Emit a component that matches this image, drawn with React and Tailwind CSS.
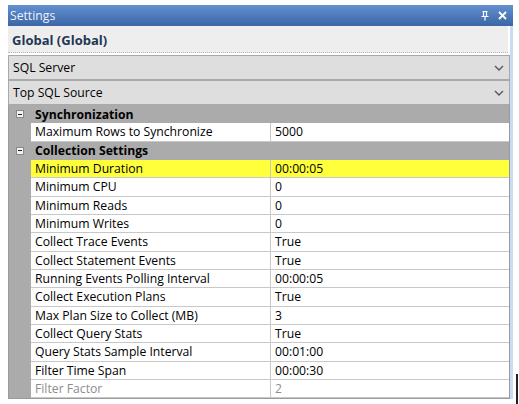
import React from 'react';

const rows = [
  { type: 'cat', name: 'Synchronization' },
  { name: 'Maximum Rows to Synchronize', value: '5000' },
  { type: 'cat', name: 'Collection Settings' },
  { name: 'Minimum Duration', value: '00:00:05', selected: true },
  { name: 'Minimum CPU', value: '0' },
  { name: 'Minimum Reads', value: '0' },
  { name: 'Minimum Writes', value: '0' },
  { name: 'Collect Trace Events', value: 'True' },
  { name: 'Collect Statement Events', value: 'True' },
  { name: 'Running Events Polling Interval', value: '00:00:05' },
  { name: 'Collect Execution Plans', value: 'True' },
  { name: 'Max Plan Size to Collect (MB)', value: '3' },
  { name: 'Collect Query Stats', value: 'True' },
  { name: 'Query Stats Sample Interval', value: '00:01:00' },
  { name: 'Filter Time Span', value: '00:00:30' },
  { name: 'Filter Factor', value: '2', disabled: true },
];

const Chevron = () => (
  <svg width="10" height="6" viewBox="0 0 10 6" className="mr-[5px]">
    <path d="M1 1 L5 5 L9 1" fill="none" stroke="#555" strokeWidth="1.3" />
  </svg>
);

const Combo = ({ label }) => (
  <div className="h-[25px] bg-[#dedede] border border-[#a9a9a9] flex items-center justify-between pl-[4px] text-[12.2px] text-black">
    <span className="pt-[1px]">{label}</span>
    <Chevron />
  </div>
);

const Minus = () => (
  <div className="w-[8px] h-[8px] bg-[#f2f2f2] border border-[#8a8a8a] flex items-center justify-center">
    <div className="w-[4px] h-[1px] bg-[#222]" />
  </div>
);

export default function App() {
  return (
    <div className="w-[519px] h-[404px] bg-white relative overflow-hidden" style={{ fontFamily: '"Segoe UI", "Open Sans", "Noto Sans", sans-serif' }}>
      <div className="ml-[8px] mt-[5px] w-[505px]">
        <div className="h-[21px] bg-gradient-to-b from-[#6390d0] to-[#3c66a6] flex items-center justify-between pl-[2px] pr-[6px]">
          <span className="text-[12.2px] text-[#eef3fb] leading-none pt-[1px]">Settings</span>
          <div className="flex items-center gap-[9px]">
            <svg width="8" height="10" viewBox="0 0 8 10">
              <path d="M1.5 0.5 H6.5 M2.5 0.5 V5.5 M5.5 0.5 V5.5 M0.5 5.5 H7.5 M4 5.5 V9.5" stroke="#fff" strokeWidth="1.2" fill="none" />
            </svg>
            <svg width="9" height="9" viewBox="0 0 9 9">
              <path d="M1 1 L8 8 M8 1 L1 8" stroke="#fff" strokeWidth="1.8" />
            </svg>
          </div>
        </div>
        <div className="border-r-[3px] border-[#c9dcf3]">
          <div className="h-[27px] bg-[#eeeeee] flex items-center pl-[4px] pt-[3px] border-b border-dotted border-[#b5b5b5] mr-[2px]">
            <span className="text-[13px] font-bold text-[#1f3757]">Global (Global)</span>
          </div>
          <div className="pt-[2px]">
            <Combo label="SQL Server" />
            <Combo label="Top SQL Source" />
          </div>
          <div className="border border-[#9a9a9a] border-t-0 bg-[#ababab] text-[12.2px]">
            {rows.map((r, i) =>
              r.type === 'cat' ? (
                <div key={i} className="h-[18.33px] flex items-center">
                  <div className="w-[22px] flex justify-center"><Minus /></div>
                  <span className="pl-[4px] pt-[1px] font-bold text-black leading-none">{r.name}</span>
                </div>
              ) : (
                <div key={i} className="h-[18.33px] flex ml-[22px]">
                  <div className={`w-[240px] flex items-center pl-[4px] pt-[1px] border-r border-b border-[#c8c8c8] ${r.selected ? 'bg-[#ffff3c]' : 'bg-white'} ${r.disabled ? 'text-[#8d8d8d]' : 'text-black'}`}>
                    <span className="leading-none">{r.name}</span>
                  </div>
                  <div className={`flex-1 flex items-center pl-[4px] pt-[1px] border-b border-[#c8c8c8] ${r.selected ? 'bg-[#ffff3c]' : 'bg-white'} ${r.disabled ? 'text-[#8d8d8d]' : 'text-black'}`}>
                    <span className="leading-none">{r.value}</span>
                  </div>
                </div>
              )
            )}
          </div>
        </div>
      </div>
      <div className="absolute left-[516px] top-[374px] w-[2px] h-[30px] bg-[#222]" />
    </div>
  );
}
